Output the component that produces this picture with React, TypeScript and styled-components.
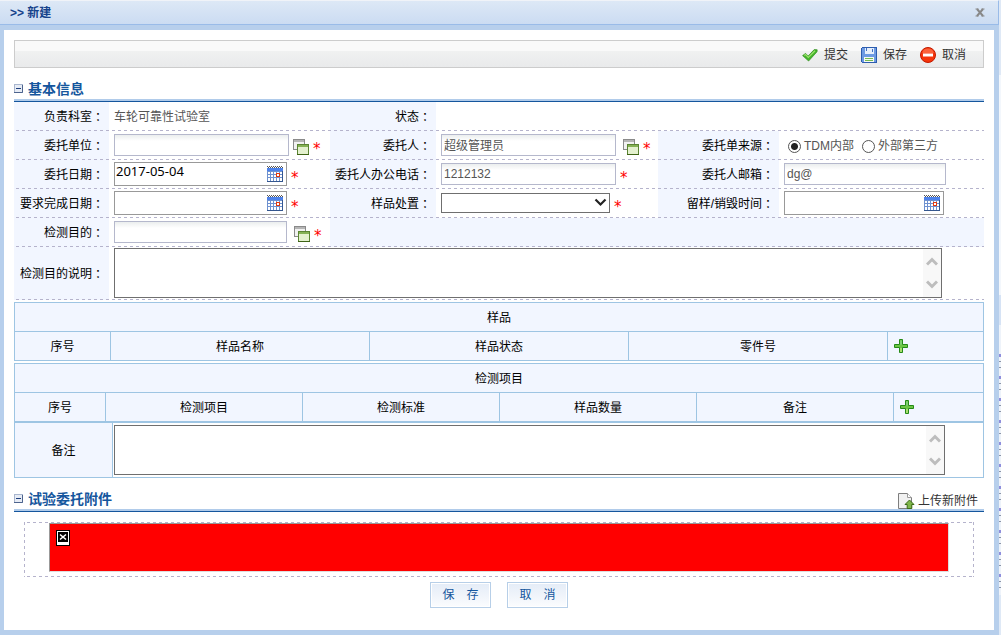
import React, { useId } from 'react';
import styled, { createGlobalStyle } from 'styled-components';

const sans = `"Liberation Sans", "Noto Sans CJK SC", sans-serif`;
const humanist = `"Noto Sans", "Noto Sans CJK SC", sans-serif`;

const GlobalStyle = createGlobalStyle`
  *, *::before, *::after { box-sizing: border-box; }
  body {
    margin: 0;
    background: #fff;
    font: 12px/18px ${sans};
    color: #000;
  }
  button, input, select, textarea { font: inherit; color: inherit; margin: 0; }
`;

/* ---------- window frame ---------- */

const Screen = styled.div`
  display: flex;
  min-height: 100vh;
`;

const Dialog = styled.section`
  flex: 1;
  min-width: 0;
  display: flex;
  flex-direction: column;
  background: #b7cfec;
`;

const Backdrop = styled.div`
  width: 2px;
  background:
    linear-gradient(#dfe9f6 75px, #f3f7fc 75px 295px, #d6e3f5 295px 325px, #eef3fa 325px 350px, transparent 350px) no-repeat,
    linear-gradient(transparent 595px, #dfe9f6 595px) no-repeat,
    repeating-linear-gradient(#eef3fa 0 2px, #8f8fdc 2px 5px, #eef3fa 5px 9px, #8c95a8 9px 10px, #eef3fa 10px 15px, #8c95a8 15px 16px, #eef3fa 16px 22px);
`;

const TitleBar = styled.header`
  display: flex;
  justify-content: space-between;
  align-items: center;
  height: 25px;
  padding: 1px 13px 0 10px;
  border-top: 1px solid #f0f3f8;
  border-right: 1px solid #99bbe8;
  border-bottom: 1px solid #99bbe8;
  background: linear-gradient(#dde8f6, #cbdcf2);
`;

const Title = styled.h1`
  margin: 0;
  font-size: 12px;
  font-weight: bold;
  color: #15428b;
`;

const CloseButton = styled.button`
  display: flex;
  padding: 0 0 2px;
  border: 0;
  background: none;
`;

const Body = styled.main`
  flex: 1;
  margin: 5px 5px 5px 4px;
  padding: 10px;
  background: #fff;
`;

const Toolbar = styled.div`
  display: flex;
  justify-content: flex-end;
  align-items: center;
  gap: 13px;
  height: 28px;
  padding: 1px 17px 0 0;
  border: 1px solid #cccccc;
  background: linear-gradient(#f9f9f9 40%, #f0f1f1 40%, #e9eaeb);
`;

const ToolButton = styled.button`
  display: flex;
  align-items: center;
  gap: 6px;
  padding: 0;
  border: 0;
  background: none;
  color: #333;
`;

/* ---------- section heading ---------- */

const SectionBar = styled.div`
  display: flex;
  align-items: center;
  gap: 5px;
  height: 34px;
  padding: 8px 6px 0 0;
  border-bottom: 1px solid #15569d;
  box-shadow: inset 0 -2px #b0cbea;
`;

const SectionTitle = styled.h2`
  flex: 1;
  margin: 0;
  font-size: 14px;
  font-weight: bold;
  color: #15569d;
`;

/* ---------- form grid ---------- */

const dashes = `repeating-linear-gradient(90deg, transparent 0 2px, #b5b3cc 2px 5px, transparent 5px 6px)`;

const Row = styled.div<{ $tall?: boolean }>`
  position: relative;
  display: grid;
  grid-template-columns: 95px 221fr 106px 222fr 121px 205fr;
  height: ${(p) => (p.$tall ? 53 : 29)}px;
  &::after {
    content: '';
    position: absolute;
    inset: auto 0 0;
    height: 1px;
    background: ${dashes};
  }
`;

const LabelCell = styled.label`
  display: flex;
  align-items: center;
  justify-content: flex-end;
  padding: 1px 5px 0 0;
  background: #f2f6ff;
  white-space: nowrap;
`;

const Colon = styled.span`
  font-family: "Noto Sans CJK TC", sans-serif;
`;

const Cell = styled.div<{ $span?: number; $tint?: boolean; $pad?: number; $plain?: boolean }>`
  display: flex;
  align-items: center;
  grid-column: span ${(p) => p.$span ?? 1};
  padding: ${(p) => (p.$plain ? '1px 0 0' : '0 0 2px')};
  padding-left: ${(p) => p.$pad ?? 5}px;
  background: ${(p) => (p.$tint ? '#f2f6ff' : 'transparent')};
  color: #555;
  min-width: 0;
`;

const TextInput = styled.input<{ $w: number }>`
  width: ${(p) => p.$w}px;
  height: 22px;
  padding: 0 2px;
  border: 1px solid #b5b8cc;
  background: linear-gradient(#ebeeee, #fff 6px);
  outline: 0;
`;

const DateBox = styled.span<{ $w: number }>`
  display: flex;
  align-items: center;
  width: ${(p) => p.$w}px;
  height: 24px;
  padding-right: 3px;
  border: 1px solid #999;
  background: #fff;
`;

const DateInput = styled.input`
  flex: 1;
  min-width: 0;
  height: 22px;
  padding: 0 0 6px 1px;
  border: 0;
  outline: 0;
  background: none;
  color: #000;
  font: 13px/16px ${humanist};
`;

const IconButton = styled.button<{ $gap?: number; $low?: boolean }>`
  display: flex;
  margin-left: ${(p) => p.$gap ?? 0}px;
  padding: ${(p) => (p.$low ? '4px 0 0' : '0')};
  border: 0;
  background: none;
`;

const Star = styled.span`
  height: 22px;
  margin-left: 4px;
  padding-top: 4px;
  font: 15px/22px "DejaVu Sans", sans-serif;
  color: #f00;
`;

const SelectBox = styled.span`
  position: relative;
  display: flex;
  width: 169px;
  height: 20px;
  svg { position: absolute; right: 3px; top: 5px; pointer-events: none; }
`;

const Select = styled.select`
  flex: 1;
  appearance: none;
  border: 1px solid #6f6f6f;
  border-radius: 0;
  background: #fff;
`;

const RadioLabel = styled.label`
  display: flex;
  align-items: center;
  gap: 3px;
  margin-right: 8px;
`;

const Radio = styled.input`
  appearance: none;
  width: 13px;
  height: 13px;
  border: 1px solid #555;
  border-radius: 50%;
  background: #fff;
  &:checked { background: radial-gradient(circle, #222 3px, #fff 4px); }
`;

const AreaBox = styled.div<{ $w: string }>`
  display: flex;
  width: ${(p) => p.$w};
  height: 50px;
  border: 1px solid #6f6f6f;
  background: #fff;
`;

const Area = styled.textarea`
  flex: 1;
  border: 0;
  outline: 0;
  resize: none;
  overflow: hidden;
`;

const ScrollTrack = styled.div`
  display: flex;
  flex-direction: column;
  justify-content: space-between;
  align-items: center;
  width: 18px;
  padding: 8px 0;
  background: #f8f8f8;
`;

/* ---------- data tables ---------- */

const Grid = styled.table`
  width: 100%;
  margin-top: 2px;
  border-collapse: collapse;
  table-layout: fixed;
  background: #f2f6ff;
`;

const Th = styled.th`
  height: 29px;
  padding: 2px 0 0;
  border: 1px solid #9ec5e3;
  font-weight: normal;
  text-align: center;
`;

const AddTh = styled(Th)`
  padding: 0 0 0 6px;
`;

const RemarkRow = styled.div`
  display: flex;
  height: 56px;
  border: 1px solid #9ec5e3;
`;

const RemarkLabel = styled.label`
  display: flex;
  align-items: center;
  justify-content: center;
  width: 98px;
  padding-top: 2px;
  border-right: 1px solid #9ec5e3;
  background: #f2f6ff;
`;

const RemarkCell = styled.div`
  flex: 1;
  padding: 2px 38px 0 1px;
`;

/* ---------- attachments ---------- */

const UploadLink = styled.a`
  display: flex;
  align-items: center;
  gap: 3px;
  padding-top: 4px;
  color: #333;
  text-decoration: none;
`;

const AttachFrame = styled.div`
  height: 55px;
  margin: 10px 10px 0;
  padding: 1px 25px 0 24px;
  border-left: 1px solid transparent;
  background:
    ${dashes} 0 0 / 100% 1px no-repeat,
    ${dashes} 0 100% / 100% 1px no-repeat,
    repeating-linear-gradient(#b5b3cc 0 3px, transparent 3px 6px) 0 0 / 1px 100% no-repeat border-box,
    repeating-linear-gradient(#b5b3cc 0 3px, transparent 3px 6px) 100% 0 / 1px 100% no-repeat;
`;

const RedPanel = styled.div`
  height: 49px;
  padding: 6px;
  border: 1px solid #ddd;
  border-top-color: #999;
  border-left-color: #999;
  background: #f00;
`;

const Actions = styled.div`
  display: flex;
  justify-content: center;
  gap: 16px;
  margin-top: 5px;
`;

const ActionButton = styled.button`
  width: 61px;
  height: 26px;
  padding: 0;
  border: 1px solid #b7cfe8;
  box-shadow: inset 0 0 0 1px #fff;
  background: linear-gradient(#e4ecf7, #fbfcfe);
  color: #15569d;
  white-space: pre;
`;

/* ---------- icons ---------- */

const CheckIcon = () => (
  <svg width="16" height="16" viewBox="0 0 16 16">
    <path d="M.6 8.6 3.6 6.4 6.200 9 12.200 2.600 15.200 2.800 15 4.800 6.600 14z" fill="#43b52a" stroke="#2f8a1c" strokeWidth=".7" />
    <path d="M2.300 8.400 3.600 7.500 6.300 10.400 13 3.800" fill="none" stroke="#9be26c" strokeWidth="1.200" />
  </svg>
);

const SaveIcon = () => (
  <svg width="16" height="16" viewBox="0 0 16 16" shapeRendering="crispEdges">
    <path d="M1.500.5h14v15h-14l-1-1v-13z" fill="#6d9ae2" stroke="#2c5cae" />
    <path d="M4 1h9v6H4z" fill="#e6effb" />
    <path d="M5 1h1v3H5zM11 2h1v3h-1z" fill="#3f6fc2" />
    <path d="M3 10h10v5H3z" fill="#f6faf2" />
    <path d="M4 11h8v1H4zM4 13h8v1H4z" fill="#76ba52" />
  </svg>
);

const StopIcon = () => (
  <svg width="16" height="16" viewBox="0 0 16 16">
    <circle cx="8" cy="8" r="7.500" fill="#f5350c" stroke="#c11a00" />
    <path d="M2.200 6a6 6 0 0 1 11.600 0z" fill="#ff7650" opacity=".7" />
    <rect x="3" y="6.500" width="10" height="3" fill="#fff" />
  </svg>
);

const CloseIcon = () => (
  <svg width="10" height="9" viewBox="0 0 10 9">
    <path d="M2 1 8 8M8 1 2 8" fill="none" stroke="#888" strokeWidth="2" />
    <path d="M.5 1h3M6.500 1h3M.5 8h3M6.500 8h3" stroke="#888" strokeWidth="1" />
  </svg>
);

const CollapseIcon = () => (
  <svg width="9" height="9" viewBox="0 0 9 9">
    <rect x=".5" y=".5" width="8" height="8" fill="#e7ecf5" stroke="#a9b6ce" />
    <path d="M0 8.500h8.500V1" fill="none" stroke="#4d648e" />
    <path d="M2 4.500h5" stroke="#1c3d7c" />
  </svg>
);

const PickIcon = () => (
  <svg width="16" height="16" viewBox="0 0 16 16">
    <rect x=".5" y=".5" width="11" height="10" fill="#f1f1f1" stroke="#8a8a8a" />
    <path d="M1 2h10" stroke="#b5b5b5" strokeWidth="2" />
    <rect x="4.500" y="5.500" width="11" height="10" fill="#e4f1cf" stroke="#5b8532" />
    <path d="M5 7h10" stroke="#86b256" strokeWidth="2" />
    <path d="M4 15.500h12" stroke="#3f6416" />
  </svg>
);

const CalendarIcon = () => (
  <svg width="16" height="16" viewBox="0 0 16 16" shapeRendering="crispEdges">
    <rect x="0" y="2" width="16" height="13" fill="#6f92d0" />
    <path d="M0 15h16v1H0zM15 5h1v11h-1z" fill="#35578f" />
    <path d="M0 2h16v3H0z" fill="#4d82ea" />
    <path d="M0 .5h16" stroke="#555" strokeWidth="1" strokeDasharray="1 1" />
    <path d="M1 1.500h15" stroke="#555" strokeWidth="1" strokeDasharray="1 1" />
    <path d="M1 6h2v2H1zM4 6h2v2H4zM7 6h2v2H7zM10 6h2v1h-2zM13 6h2v2h-2zM1 9h2v2H1zM4 9h2v2H4zM7 9h2v2H7zM13 9h2v2h-2zM1 12h2v3H1zM4 12h2v3H4zM7 12h2v3H7zM10 12h2v3h-2zM13 12h2v3h-2z" fill="#fff" />
    <rect x="9.500" y="7.500" width="3" height="3" fill="#fff" stroke="#e33a10" />
  </svg>
);

const PlusIcon = () => (
  <svg width="14" height="14" viewBox="0 0 14 14">
    <path d="M5.500.5h3v5h5v3h-5v5h-3v-5h-5v-3h5z" fill="#6cc644" stroke="#258a17" />
    <path d="M6.500 1.500h1v4h-1z" fill="#8fd8a0" />
    <path d="M6.500 9h1v4h-1z" fill="#e6f59a" />
  </svg>
);

const UploadIcon = () => (
  <svg width="17" height="16" viewBox="0 0 17 16">
    <path d="M.5.5h9l4 4v11H.5z" fill="#f1f1f1" stroke="#7e7e7e" />
    <path d="M9.500.5v4h4" fill="#fff" stroke="#9a9a9a" />
    <path d="M11.500 7 16 11.500h-2.200v4H9.200v-4H7z" fill="#7fb64a" stroke="#3c6a16" />
  </svg>
);

const Chevron = ({ down }: { down?: boolean }) => (
  <svg width="12" height="9" viewBox="0 0 12 9">
    <path d={down ? 'M1 1.500 6 6.500 11 1.500' : 'M1 7.500 6 2.500 11 7.500'} fill="none" stroke="#bdbdbd" strokeWidth="3" />
  </svg>
);

const BrokenImage = () => (
  <svg width="14" height="16" viewBox="0 0 14 16" role="img" aria-label="附件">
    <rect x=".5" y=".5" width="13" height="15" fill="#fff" stroke="#000" />
    <rect x="2" y="2" width="10" height="10" fill="#000" />
    <path d="M4 4.500 10 9.500M10 4.500 4 9.500" stroke="#fff" strokeWidth="1.600" />
  </svg>
);

/* ---------- composed parts ---------- */

const FieldLabel = ({ text, htmlFor }: { text: string; htmlFor?: string }) => (
  <LabelCell htmlFor={htmlFor}>
    {text}
    <Colon lang="zh-TW">：</Colon>
  </LabelCell>
);

const DateField = ({ id, w, value }: { id: string; w: number; value?: string }) => (
  <DateBox $w={w}>
    <DateInput id={id} defaultValue={value} />
    <IconButton type="button" aria-label="选择日期"><CalendarIcon /></IconButton>
  </DateBox>
);

const Picker = ({ gap }: { gap: number }) => (
  <>
    <IconButton type="button" aria-label="选择" $gap={gap} $low><PickIcon /></IconButton>
    <Star>*</Star>
  </>
);

const ScrollArea = ({ id, w }: { id: string; w: string }) => (
  <AreaBox $w={w}>
    <Area id={id} />
    <ScrollTrack><Chevron /><Chevron down /></ScrollTrack>
  </AreaBox>
);

const DataTable = ({ title, columns, first, last }: { title: string; columns: string[]; first: number; last: number }) => (
  <Grid>
    <colgroup>
      <col width={first} />
      {columns.map((c) => <col key={c} />)}
      <col width={last} />
    </colgroup>
    <thead>
      <tr><Th colSpan={columns.length + 2}>{title}</Th></tr>
      <tr>
        <Th>序号</Th>
        {columns.map((c) => <Th key={c}>{c}</Th>)}
        <AddTh><IconButton type="button" aria-label="添加"><PlusIcon /></IconButton></AddTh>
      </tr>
    </thead>
  </Grid>
);

export default function App() {
  const id = useId();
  return (
    <>
      <GlobalStyle />
      <Screen>
        <Dialog role="dialog" aria-label="新建">
          <TitleBar>
            <Title>&gt;&gt; 新建</Title>
            <CloseButton type="button" aria-label="关闭"><CloseIcon /></CloseButton>
          </TitleBar>
          <Body>
            <Toolbar>
              <ToolButton type="button"><CheckIcon />提交</ToolButton>
              <ToolButton type="button"><SaveIcon />保存</ToolButton>
              <ToolButton type="button"><StopIcon />取消</ToolButton>
            </Toolbar>

            <SectionBar>
              <CollapseIcon />
              <SectionTitle>基本信息</SectionTitle>
            </SectionBar>

            <Row>
              <FieldLabel text="负责科室" />
              <Cell $plain>车轮可靠性试验室</Cell>
              <FieldLabel text="状态" />
              <Cell $span={3} />
            </Row>
            <Row>
              <FieldLabel text="委托单位" htmlFor={id + 'unit'} />
              <Cell><TextInput id={id + 'unit'} $w={175} /><Picker gap={4} /></Cell>
              <FieldLabel text="委托人" htmlFor={id + 'person'} />
              <Cell><TextInput id={id + 'person'} $w={175} defaultValue="超级管理员" /><Picker gap={7} /></Cell>
              <FieldLabel text="委托单来源" />
              <Cell $pad={9} $plain>
                <RadioLabel><Radio type="radio" name="source" defaultChecked />TDM内部</RadioLabel>
                <RadioLabel><Radio type="radio" name="source" />外部第三方</RadioLabel>
              </Cell>
            </Row>
            <Row>
              <FieldLabel text="委托日期" htmlFor={id + 'date'} />
              <Cell><DateField id={id + 'date'} w={173} value="2017-05-04" /><Star>*</Star></Cell>
              <FieldLabel text="委托人办公电话" htmlFor={id + 'tel'} />
              <Cell><TextInput id={id + 'tel'} $w={175} defaultValue="1212132" /><Star>*</Star></Cell>
              <FieldLabel text="委托人邮箱" htmlFor={id + 'mail'} />
              <Cell><TextInput id={id + 'mail'} $w={162} defaultValue="dg@" /></Cell>
            </Row>
            <Row>
              <FieldLabel text="要求完成日期" htmlFor={id + 'due'} />
              <Cell><DateField id={id + 'due'} w={173} /><Star>*</Star></Cell>
              <FieldLabel text="样品处置" htmlFor={id + 'dispose'} />
              <Cell>
                <SelectBox>
                  <Select id={id + 'dispose'}><option value="" /></Select>
                  <svg width="13" height="9" viewBox="0 0 13 9">
                    <path d="M1.500 1.500 6.500 6.500 11.500 1.500" fill="none" stroke="#222" strokeWidth="2.200" />
                  </svg>
                </SelectBox>
                <Star>*</Star>
              </Cell>
              <FieldLabel text="留样/销毁时间" htmlFor={id + 'keep'} />
              <Cell><DateField id={id + 'keep'} w={160} /></Cell>
            </Row>
            <Row>
              <FieldLabel text="检测目的" htmlFor={id + 'aim'} />
              <Cell><TextInput id={id + 'aim'} $w={173} /><Picker gap={7} /></Cell>
              <Cell $span={4} $tint />
            </Row>
            <Row $tall>
              <FieldLabel text="检测目的说明" htmlFor={id + 'note'} />
              <Cell $span={5}><ScrollArea id={id + 'note'} w="calc(100% - 42px)" /></Cell>
            </Row>

            <DataTable title="样品" columns={['样品名称', '样品状态', '零件号']} first={96} last={96} />
            <DataTable title="检测项目" columns={['检测项目', '检测标准', '样品数量', '备注']} first={91} last={90} />
            <RemarkRow>
              <RemarkLabel htmlFor={id + 'remark'}>备注</RemarkLabel>
              <RemarkCell><ScrollArea id={id + 'remark'} w="100%" /></RemarkCell>
            </RemarkRow>

            <SectionBar>
              <CollapseIcon />
              <SectionTitle>试验委托附件</SectionTitle>
              <UploadLink href="#upload"><UploadIcon />上传新附件</UploadLink>
            </SectionBar>
            <AttachFrame><RedPanel><BrokenImage /></RedPanel></AttachFrame>
            <Actions>
              <ActionButton type="button">保{'\u3000'}存</ActionButton>
              <ActionButton type="button">取{'\u3000'}消</ActionButton>
            </Actions>
          </Body>
        </Dialog>
        <Backdrop />
      </Screen>
    </>
  );
}
